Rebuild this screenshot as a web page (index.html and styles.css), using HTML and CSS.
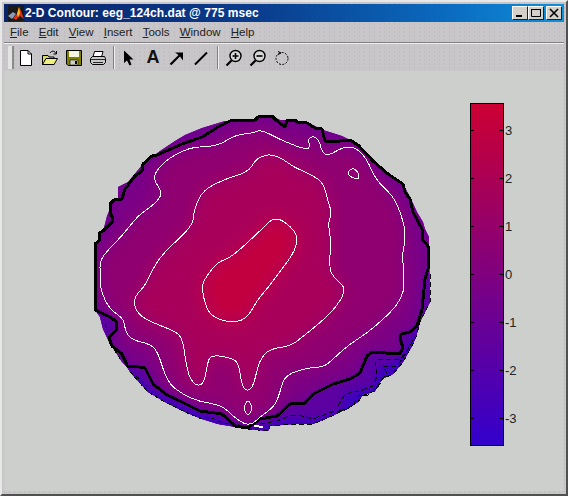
FILE: index.html
```html
<!DOCTYPE html>
<html lang="en">
<head>
    <meta charset="UTF-8">
    <meta name="viewport" content="width=device-width, initial-scale=1.0">
    <title>2-D Contour: eeg_124ch.dat @ 775 msec</title>
    <link rel="stylesheet" href="styles.css">
</head>
<body>
<div class="window">
    <div class="titlebar">
        <svg class="app-icon" width="16" height="16" viewBox="0 0 16 16">
            <rect width="16" height="16" fill="#1a1a1a"/>
            <path d="M0 11 L5 7 L8 9 L4 14 Z" fill="#8a9ab8"/>
            <path d="M5 13 L9 9 L11 2 L13 6 L16 14 L12 11 L8 15 Z" fill="#e03010"/>
            <path d="M9 9 L11 2 L12 8 L10 12 Z" fill="#f8c020"/>
        </svg>
        <span class="title-text">2-D Contour: eeg_124ch.dat @ 775 msec</span>
        <div class="win-buttons">
            <button class="win-btn"><svg width="12" height="10" viewBox="0 0 12 10"><rect x="2" y="7" width="6" height="2" fill="#000"/></svg></button>
            <button class="win-btn"><svg width="12" height="10" viewBox="0 0 12 10"><path d="M1.5 1.5H10.5V8.5H1.5Z M1 1.5H11" fill="none" stroke="#000"/></svg></button>
            <button class="win-btn win-close"><svg width="12" height="10" viewBox="0 0 12 10"><path d="M2 1L10 9M10 1L2 9" stroke="#000" stroke-width="1.6"/></svg></button>
        </div>
    </div>

    <div class="menubar">
        <span class="menu-item"><u>F</u>ile</span>
        <span class="menu-item"><u>E</u>dit</span>
        <span class="menu-item"><u>V</u>iew</span>
        <span class="menu-item"><u>I</u>nsert</span>
        <span class="menu-item"><u>T</u>ools</span>
        <span class="menu-item"><u>W</u>indow</span>
        <span class="menu-item"><u>H</u>elp</span>
    </div>

    <div class="toolbar">
        <div class="grip"></div>
        <div class="tool"><svg width="16" height="18" viewBox="0 0 16 18"><path d="M2.5 1.5H10L13.5 5V16.5H2.5Z" fill="#fff" stroke="#000"/><path d="M10 1.5V5H13.5" fill="none" stroke="#000"/></svg></div>
        <div class="tool"><svg width="18" height="18" viewBox="0 0 18 18"><path d="M1.5 15.5V6.5H7L8 8H13V15.5Z" fill="#d8d860" stroke="#000"/><path d="M1.5 15.5L5 9.5H16.5L13 15.5Z" fill="#f0f080" stroke="#000"/><path d="M9 4C10.5 1.5 13.5 1.5 15 4.5M15.5 2V5H12.5" fill="none" stroke="#000"/></svg></div>
        <div class="tool"><svg width="16" height="16" viewBox="0 0 16 16"><path d="M0.5 0.5H15.5V15.5H2L0.5 14Z" fill="#808000" stroke="#000"/><rect x="3" y="1" width="10" height="6" fill="#f4f4e0"/><rect x="4" y="10" width="8" height="5" fill="#d0d0c0" stroke="#000" stroke-width="0.6"/><rect x="9" y="11" width="2" height="3" fill="#000"/></svg></div>
        <div class="tool"><svg width="18" height="16" viewBox="0 0 18 16"><path d="M5.5 1.5H14L12.5 7H4Z" fill="#fff" stroke="#000"/><path d="M1.5 8.5L3.5 6.5H15.5L16.5 8.5V12.5L14.5 14.5H3.5L1.5 12.5Z" fill="#c8c8c8" stroke="#000"/><path d="M2 9.5H16M4 12.5H14" stroke="#000" stroke-width="0.8"/></svg></div>
        <div class="tool-sep"></div>
        <div class="tool"><svg width="14" height="16" viewBox="0 0 14 16"><path d="M2 0.5V13L5 10.5L7.5 15.5L9.5 14.5L7.5 9.5H11.5Z" fill="#000"/></svg></div>
        <div class="tool tool-letter">A</div>
        <div class="tool"><svg width="16" height="16" viewBox="0 0 16 16"><path d="M1.5 14.5L12 4" stroke="#000" stroke-width="2.2"/><path d="M6 2.5H14V10.5L11 6.5L9.5 5Z" fill="#000"/></svg></div>
        <div class="tool"><svg width="16" height="16" viewBox="0 0 16 16"><path d="M2 14.5L14 2.5" stroke="#000" stroke-width="2"/></svg></div>
        <div class="tool-sep tool-sep-wide"></div>
        <div class="tool"><svg width="18" height="18" viewBox="0 0 18 18"><circle cx="10.5" cy="7" r="5.5" fill="#d8d8d8" stroke="#000" stroke-width="1.4"/><path d="M6.5 11.5L1.5 16.5" stroke="#000" stroke-width="2.2"/><path d="M7.5 7H13.5M10.5 4V10" stroke="#000" stroke-width="1.6"/></svg></div>
        <div class="tool"><svg width="18" height="18" viewBox="0 0 18 18"><circle cx="10.5" cy="7" r="5.5" fill="#d8d8d8" stroke="#000" stroke-width="1.4"/><path d="M6.5 11.5L1.5 16.5" stroke="#000" stroke-width="2.2"/><path d="M7.5 7H13.5" stroke="#000" stroke-width="1.6"/></svg></div>
        <div class="tool"><svg width="16" height="16" viewBox="0 0 16 16"><circle cx="8" cy="8.5" r="6" fill="none" stroke="#000" stroke-dasharray="2 1.4"/><path d="M4 1.5L7 3L4 4.5" fill="none" stroke="#000"/></svg></div>
    </div>

    <div class="canvas">
        <svg class="plot" width="345" height="326" viewBox="90 110 345 326">
            <defs>
                <path id="edge" d="M95 275L95 245L99 242L99 234L103 232L105 225L107 217L112 205L118 200L118 188L128 183L143 165L160 152L175 142L185 136L202 129L225 122L230 122L255 121L258 118L272 117L280 121L287 121L307 124L313 126L323 131L342 137L350 141L358 146L388 175L403 185L410 198L417 213L423 223L425 230L429 238L429 247L430 303L420 323L416 338L412 347L403 363L393 375L382 380L375 392L362 397L358 403L347 410L340 413L332 417L313 425L293 425L270 427L268 432L248 430L218 425L202 420L185 413L165 403L148 393L130 373L127 368L122 363L115 352L110 345L103 330L100 318L95 311Z"/>
                <path id="zero" d="M95 311L95 245L99 242L99 234L103 232L113 222L112 217L110 215L110 205L114 201L122 200L125 190L135 177L142 172L143 165L152 157L157 156L182 145L202 138L218 128L230 122L255 121L258 118L272 117L277 122L285 128L287 121L295 121L297 123L307 124L315 129L322 130L325 142L340 142L350 141L358 146L373 162L388 175L403 185L405 193L410 200L413 213L422 230L422 240L428 247L428 270L425 280L422 310L417 327L410 333L401 335L400 340L403 348L400 355L372 353L367 357L360 374L350 380L333 385L313 395L305 404L290 405L277 417L260 420L248 429L235 427L222 415L200 412L182 403L167 396L153 385L145 369L133 367L128 368L122 355L112 347L109 339L117 330L116 322L108 317Z"/>
                <path id="level1" class="smooth" d="M100 275L100 262L107 252L122 237L137 218L145 212L158 202L162 193L155 183L154 175L165 162L182 152L195 148L218 147L235 136L253 134L260 131L270 135L283 142L307 151L310 147L308 140L313 137L319 141L322 153L328 157L343 148L355 148L367 160L375 180L393 197L400 212L405 230L405 242L402 258L404 270L404 300L373 330L347 347L330 363L323 368L307 369L285 376L280 393L275 407L260 418L250 427L237 421L222 406L200 403L182 395L167 383L158 353L150 345L132 341L125 332L124 320L112 312L105 302L100 287Z"/>
                <path id="level2" class="smooth" d="M150 275L162 255L193 227L194 210L203 191L225 180L248 173L255 162L260 158L270 155L283 160L292 167L303 172L323 182L328 202L332 215L328 223L331 242L329 270L335 280L347 290L333 313L300 340L290 347L270 350L262 358L258 367L252 392L242 390L239 363L228 358L210 356L207 367L204 385L195 387L187 373L183 340L175 332L143 320L134 308L135 297L145 287Z"/>
                <path id="level3" class="smooth" d="M208 275L218 263L232 258L262 230L272 220L280 220L290 227L298 237L295 252L282 270L267 290L258 300L248 318L235 324L217 320L207 312L201 287Z"/>
                <clipPath id="head"><use href="#edge"/></clipPath>
                <filter id="soft" filterUnits="userSpaceOnUse" x="60" y="80" width="420" height="390">
                    <feGaussianBlur stdDeviation="8"/>
                </filter>
                <filter id="soft-edge" filterUnits="userSpaceOnUse" x="60" y="80" width="420" height="390">
                    <feGaussianBlur stdDeviation="3"/>
                </filter>
            </defs>

            <g clip-path="url(#head)">
                <rect x="90" y="110" width="345" height="326" fill="#6c0094"/>
                <g filter="url(#soft)">
                    <rect x="60" y="80" width="420" height="390" fill="#6c0094"/>
                    <use href="#zero" fill="#7c0084"/>
                    <use href="#level1" fill="#900070"/>
                    <use href="#level2" fill="#a8005a"/>
                    <use href="#level3" fill="#c20040"/>
                </g>
                <!-- below the zero line the map falls off to blue -->
                <path filter="url(#soft-edge)" fill="#5c00a2" d="M428 270L425 280L422 310L417 327L410 333L401 335L400 340L403 348L400 355L372 353L367 357L360 374L350 380L333 385L313 395L305 404L290 405L277 417L260 420L248 429L235 427L222 415L200 412L182 403L167 396L153 385L145 369L133 367L128 368L122 355L112 347L109 339L117 330L116 322L108 317L95 311L80 445L445 445L445 270Z"/>
                <path filter="url(#soft-edge)" fill="#3e00be" d="M120 372L135 376L148 390L185 408L215 420L250 430L290 419L313 420L340 412L345 395L373 387L377 370L400 360L415 335L445 300L445 445L80 445Z"/>
            </g>

            <g fill="none" stroke="#000" shape-rendering="crispEdges">
                <path stroke-dasharray="5 3" d="M430 275L430 303L420 323L416 338L412 347L403 363L393 375L382 380L375 392L362 397L358 403L347 410L340 413L332 417L313 425L293 425L270 427L268 432L248 430"/>
                <path stroke-dasharray="5 3" d="M260 425L277 422L290 417L298 416L313 420L332 413L340 412L338 407L345 395L360 392L373 387L377 377L375 363L380 360L400 360L407 352L415 338"/>
                <path stroke-dasharray="5 3" d="M340 412L353 407L358 397L368 396L378 388L387 373L383 368L397 367L407 353"/>
                <path stroke-dasharray="4 3" d="M248 430L232 423L225 425L210 418L202 420L185 413L165 403L148 393L130 373"/>
                <path stroke-dasharray="4 3" d="M130 373L135 376L143 383L148 388M105 325L108 333M110 345L115 352L122 363"/>
                <use href="#zero" stroke-width="3" stroke-linejoin="round"/>
            </g>
            <g fill="none" stroke="#fff" shape-rendering="crispEdges">
                <use href="#level1"/>
                <use href="#level2"/>
                <use href="#level3"/>
                <path class="smooth" d="M347 174L352 169L356 171L359 175L359 180L352 179Z"/>
                <ellipse cx="248" cy="409" rx="3.5" ry="6.5"/>
                <path d="M254 427L263 428" stroke-width="2"/>
            </g>
        </svg>

        <div class="colorbar">
            <div class="cbar-body">
                <div class="cbar-tick"></div>
                <div class="cbar-tick"></div>
                <div class="cbar-tick"></div>
                <div class="cbar-tick"></div>
                <div class="cbar-tick"></div>
                <div class="cbar-tick"></div>
                <div class="cbar-tick"></div>
            </div>
            <div class="cbar-labels">
                <span>3</span>
                <span>2</span>
                <span>1</span>
                <span>0</span>
                <span>-1</span>
                <span>-2</span>
                <span>-3</span>
            </div>
        </div>
    </div>
</div>

<script>
    // round off the contour polygons: corner points become control points, edges meet at midpoints
    document.querySelectorAll("path.smooth").forEach(function (path) {
        const nums = path.getAttribute("d").match(/\d+/g).map(Number);
        const pts = [];
        for (let i = 0; i < nums.length; i += 2) {
            pts.push([nums[i], nums[i + 1]]);
        }
        const mid = function (a, b) {
            return ((a[0] + b[0]) / 2) + " " + ((a[1] + b[1]) / 2);
        };
        let d = "M" + mid(pts[pts.length - 1], pts[0]);
        pts.forEach(function (p, i) {
            d += "Q" + p[0] + " " + p[1] + " " + mid(p, pts[(i + 1) % pts.length]);
        });
        path.setAttribute("d", d + "Z");
    });
</script>
</body>
</html>
```

FILE: styles.css
```css
html, body {
    margin: 0;
    padding: 0;
}

body {
    width: 568px;
    height: 496px;
    overflow: hidden;
    font-family: "Liberation Sans", Arial, sans-serif;
}

.window {
    box-sizing: border-box;
    width: 568px;
    height: 496px;
    display: flex;
    flex-direction: column;
    padding: 2px 2px 3px 2px;
    background-color: #c8c6c8;
    background-image: radial-gradient(#b8b6b8 0.5px, transparent 0.8px);
    background-size: 5px 4px;
    border: 2px solid;
    border-color: #e8e8e8 #505050 #505050 #e8e8e8;
}

.titlebar {
    flex: none;
    height: 18px;
    display: flex;
    align-items: center;
    padding: 0 2px;
    background: linear-gradient(to right, #0a246a 0%, #0a3c8c 45%, #0a6cc0 80%, #1090d8 100%);
    color: #fff;
}

.app-icon {
    flex: none;
    margin-left: 2px;
}

.title-text {
    margin-left: 1px;
    font-size: 12px;
    font-weight: bold;
    letter-spacing: 0.05px;
    white-space: nowrap;
}

.win-buttons {
    margin-left: auto;
    display: flex;
}

.win-btn {
    box-sizing: border-box;
    width: 16px;
    height: 14px;
    padding: 0;
    display: flex;
    align-items: center;
    justify-content: center;
    background-color: #d4d0c8;
    border: 1px solid;
    border-color: #fff #222 #222 #fff;
}

.win-close {
    margin-left: 2px;
}

.menubar {
    flex: none;
    height: 20px;
    display: flex;
    align-items: center;
    padding-left: 6px;
    font-size: 11.5px;
    color: #222;
    border-bottom: 1px solid #808080;
}

.menu-item {
    margin-right: 10.2px;
}

.toolbar {
    flex: none;
    height: 27px;
    display: flex;
    align-items: center;
    border-top: 1px solid #f0f0f0;
}

.grip {
    box-sizing: border-box;
    width: 6px;
    height: 23px;
    margin-left: 4px;
    background-color: #e4e4e4;
    border-right: 2px solid #8c8c8c;
}

.tool {
    flex: none;
    width: 24px;
    height: 24px;
    display: flex;
    align-items: center;
    justify-content: center;
}

.tool-letter {
    font-size: 18px;
    font-weight: bold;
    color: #111;
}

.tool-sep {
    flex: none;
    width: 2px;
    height: 23px;
    margin: 0 2px 0 3px;
    background-color: #f0f0f0;
    border-left: 1px solid #808080;
    box-sizing: border-box;
}

.tool-sep-wide {
    margin: 0 3px 0 4px;
}

.canvas {
    flex: 1;
    display: flex;
    align-items: flex-start;
    background-color: #cdcfcd;
}

.plot {
    flex: none;
    margin: 38px 0 0 86px;
}

.colorbar {
    flex: none;
    display: flex;
    margin: 32px 0 0 35px;
}

.cbar-body {
    box-sizing: border-box;
    width: 34px;
    height: 343px;
    padding: 3px 0;
    display: grid;
    grid-template-rows: repeat(7, 1fr);
    border: 1px solid #000;
    background: linear-gradient(to bottom, #cc0033, #3300cc);
}

.cbar-tick {
    display: flex;
    align-items: center;
    justify-content: space-between;
}

.cbar-tick::before,
.cbar-tick::after {
    content: "";
    height: 1px;
    background-color: #000;
}

.cbar-tick::before {
    width: 3px;
}

.cbar-tick::after {
    width: 4px;
}

.cbar-labels {
    height: 343px;
    padding: 3px 0;
    box-sizing: border-box;
    display: grid;
    grid-template-rows: repeat(7, 1fr);
    align-items: center;
    margin-left: 1px;
    font-size: 13px;
    color: #222;
}
```
